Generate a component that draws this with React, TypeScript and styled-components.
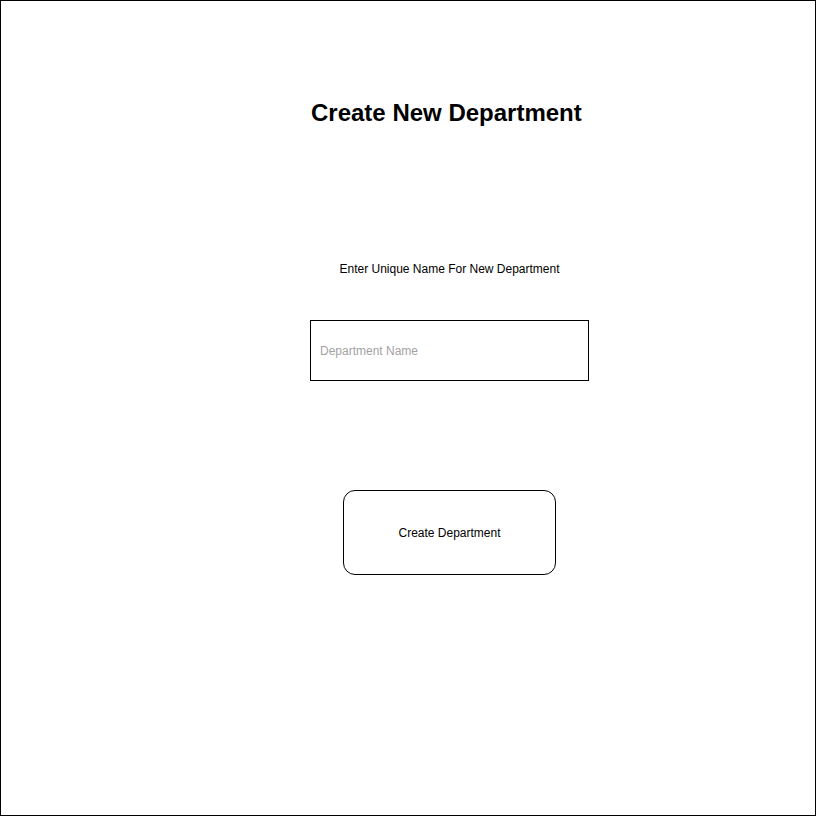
import React from "react";
import styled, { createGlobalStyle } from "styled-components";

const Global = createGlobalStyle`
  html, body { margin: 0; padding: 0; background: #fff; }
  body { font-family: "Liberation Sans", Arial, Helvetica, sans-serif; color: #000; }
`;

const Frame = styled.div`
  box-sizing: border-box;
  width: 816px;
  height: 816px;
  border: 1px solid #000;
  display: flex;
  flex-direction: column;
  align-items: flex-start;
`;

const Title = styled.h1`
  margin: 98px 0 0 310px;
  font-size: 24px;
  line-height: 28px;
  font-weight: 700;
`;

const Column = styled.div`
  margin-left: 309px;
  width: 279px;
  display: flex;
  flex-direction: column;
  align-items: center;
`;

const Label = styled.label`
  margin-top: 135px;
  font-size: 12px;
  line-height: 14px;
`;

const NameInput = styled.input`
  box-sizing: border-box;
  margin-top: 44px;
  width: 279px;
  height: 61px;
  border: 1px solid #000;
  border-radius: 0;
  padding: 0 9px;
  font-family: inherit;
  font-size: 12px;
  outline: none;
  &::placeholder { color: #a3a3a3; }
`;

const Button = styled.button`
  box-sizing: border-box;
  margin-top: 109px;
  width: 213px;
  height: 85px;
  border: 1px solid #000;
  border-radius: 12px;
  background: #fff;
  font-family: inherit;
  font-size: 12px;
  color: #000;
  cursor: pointer;
`;

export default function App() {
  return (
    <>
      <Global />
      <Frame>
        <Title>Create New Department</Title>
        <Column>
          <Label htmlFor="dept">Enter Unique Name For New Department</Label>
          <NameInput id="dept" placeholder="Department Name" />
          <Button>Create Department</Button>
        </Column>
      </Frame>
    </>
  );
}
